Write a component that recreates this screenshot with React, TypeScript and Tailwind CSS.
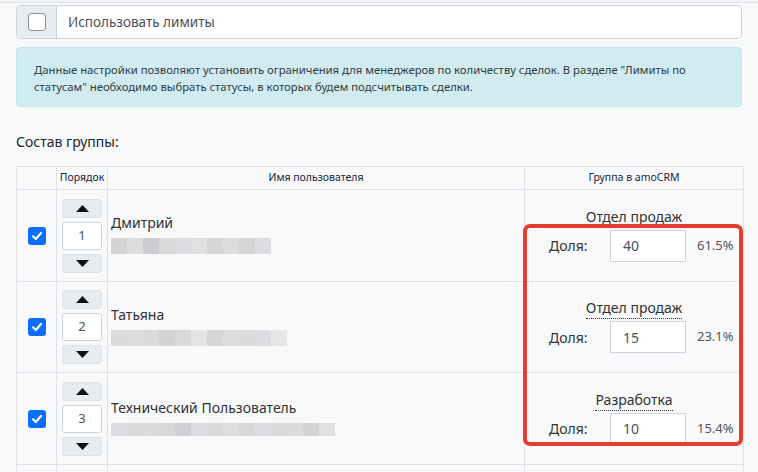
import { Fragment } from 'react'

type Member = {
  order: number
  name: string
  group: string
  dotted: boolean
  share: number
  pct: string
  blur: string[]
  blurH: number
}

const members: Member[] = [
  {
    order: 1,
    name: 'Дмитрий',
    group: 'Отдел продаж',
    dotted: false,
    share: 40,
    pct: '61.5%',
    blur: ['#d3d4d6', '#dcdddf', '#cbcccf', '#d8d9db', '#dcdde0', '#dfe0e2', '#d5d6d8', '#dbdcde', '#d4d5d7', '#dcdde0'],
    blurH: 16,
  },
  {
    order: 2,
    name: 'Татьяна',
    group: 'Отдел продаж',
    dotted: true,
    share: 15,
    pct: '23.1%',
    blur: ['#dadbdd', '#dbdcde', '#d9dadc', '#d2d3d5', '#d8d9db', '#e3e4e6', '#d5d6d8', '#dbdcde', '#dadbdd', '#dcdde0', '#e6e7e9'],
    blurH: 16,
  },
  {
    order: 3,
    name: 'Технический Пользователь',
    group: 'Разработка',
    dotted: true,
    share: 10,
    pct: '15.4%',
    blur: ['#dcdde0', '#d8d9db', '#d9dadc', '#d6d7d9', '#cfd0d3', '#dcdde0', '#d8d9db', '#dddee0', '#d6d7d9', '#dcdde0', '#d8d9db', '#dadbdd', '#d3d4d6', '#dfe0e2'],
    blurH: 13,
  },
]

function Check() {
  return (
    <div className="w-[18px] h-[18px] rounded-[3px] bg-[#0d6efd] flex items-center justify-center">
      <svg width="12" height="12" viewBox="0 0 12 12">
        <polyline points="2,6.3 4.8,9 10,3" fill="none" stroke="white" strokeWidth="2.2" strokeLinecap="round" strokeLinejoin="round" />
      </svg>
    </div>
  )
}

function ArrowBtn({ up }: { up: boolean }) {
  return (
    <div className="h-[19px] rounded-[3px] bg-[#e9ecef] border border-[#e0e3e6] flex items-center justify-center">
      <svg width="13" height="7" viewBox="0 0 13 7">
        {up ? <polygon points="0,7 6.5,0 13,7" fill="#111" /> : <polygon points="0,0 13,0 6.5,7" fill="#111" />}
      </svg>
    </div>
  )
}

export default function App() {
  return (
    <div className="w-[758px] h-[472px] overflow-hidden bg-[#f8f9fa] font-['Noto_Sans','Open_Sans',sans-serif] text-[#212529]">
      <div className="h-[3px] border-b border-[#dee2e6] bg-[#f3f4f6]" />

      <div className="px-4 pt-[2px]">
        {/* чекбокс лимитов */}
        <div className="flex h-[34px] rounded-[4px] border border-[#ced4da] bg-white overflow-hidden">
          <div className="w-[40px] bg-[#e9ecef] border-r border-[#ced4da] flex items-center justify-center">
            <div className="w-[18px] h-[18px] rounded-[3px] border border-[#8a8f94] bg-white" />
          </div>
          <div className="flex items-center pl-[11px] text-[13.5px] text-[#495057]">Использовать лимиты</div>
        </div>

        {/* подсказка */}
        <div className="mt-[8px] rounded-[4px] border border-[#bee5eb] bg-[#d1ecf1] pl-[17px] pt-[13px] pb-[11px] text-[11.3px] leading-[17px] text-[#2f3b3e] whitespace-nowrap">
          Данные настройки позволяют установить ограничения для менеджеров по количеству сделок. В разделе "Лимиты по
          <br />
          статусам" необходимо выбрать статусы, в которых будем подсчитывать сделки.
        </div>

        <div className="mt-[25px] text-[14px] leading-[20px]">Состав группы:</div>

        {/* таблица */}
        <div className="relative mt-[14px]">
          <table className="w-[727px] border-collapse table-fixed">
            <colgroup>
              <col className="w-[40px]" />
              <col className="w-[51px]" />
              <col className="w-[417px]" />
              <col className="w-[219px]" />
            </colgroup>
            <thead>
              <tr className="h-[23px] text-[10.5px] text-[#1c2540]">
                <th className="border border-[#dee2e6] font-normal p-0" />
                <th className="border border-[#dee2e6] font-normal p-0 whitespace-nowrap">Порядок</th>
                <th className="border border-[#dee2e6] font-normal p-0">Имя пользователя</th>
                <th className="border border-[#dee2e6] font-normal p-0">Группа в amoCRM</th>
              </tr>
            </thead>
            <tbody>
              {members.map((m) => (
                <Fragment key={m.order}>
                  <tr className={m.order === 2 ? 'h-[91px]' : 'h-[92px]'}>
                    <td className="border border-[#dee2e6] align-middle p-0">
                      <div className="flex justify-center">
                        <Check />
                      </div>
                    </td>
                    <td className="border border-[#dee2e6] align-middle px-[5px] py-0">
                      <div className="flex flex-col gap-[4px]">
                        <ArrowBtn up />
                        <div className="h-[28px] rounded-[3px] border border-[#ced4da] bg-white flex items-center justify-center text-[13px] text-[#495057]">
                          {m.order}
                        </div>
                        <ArrowBtn up={false} />
                      </div>
                    </td>
                    <td className="border border-[#dee2e6] align-middle pl-[3px] pb-[4px]">
                      <div className="text-[14px] leading-[20px] text-[#333]">{m.name}</div>
                      <div className="flex mt-[5px]" style={{ height: m.blurH }}>
                        {m.blur.map((c, i) => (
                          <div key={i} className="w-[16px] h-full" style={{ backgroundColor: c }} />
                        ))}
                      </div>
                    </td>
                    <td className="border border-[#dee2e6] align-middle pb-[6px]">
                      <div className="text-center">
                        <span
                          className={
                            m.dotted
                              ? 'text-[14px] leading-[20px] text-[#333] border-b border-dotted border-[#333] pb-[1px]'
                              : 'text-[14px] leading-[20px] text-[#333]'
                          }
                        >
                          {m.group}
                        </span>
                      </div>
                      <div className="flex items-center mt-[2px] pl-[24px]">
                        <span className="w-[61px] text-[14px] text-[#333]">Доля:</span>
                        <div className="w-[76px] h-[32px] border border-[#ced4da] bg-white flex items-center pl-[12px] text-[14px] text-[#495057]">
                          {m.share}
                        </div>
                        <span className="ml-[11px] text-[13px] text-[#555]">{m.pct}</span>
                      </div>
                    </td>
                  </tr>
                </Fragment>
              ))}
              <tr className="h-[20px]">
                <td className="border border-[#dee2e6]" />
                <td className="border border-[#dee2e6]" />
                <td className="border border-[#dee2e6]" />
                <td className="border border-[#dee2e6]" />
              </tr>
            </tbody>
          </table>

          {/* выделение */}
          <div className="absolute left-[507px] top-[58px] w-[220px] h-[222px] border-[4px] border-[#e43d30] rounded-[7px] pointer-events-none" />
        </div>
      </div>
    </div>
  )
}
